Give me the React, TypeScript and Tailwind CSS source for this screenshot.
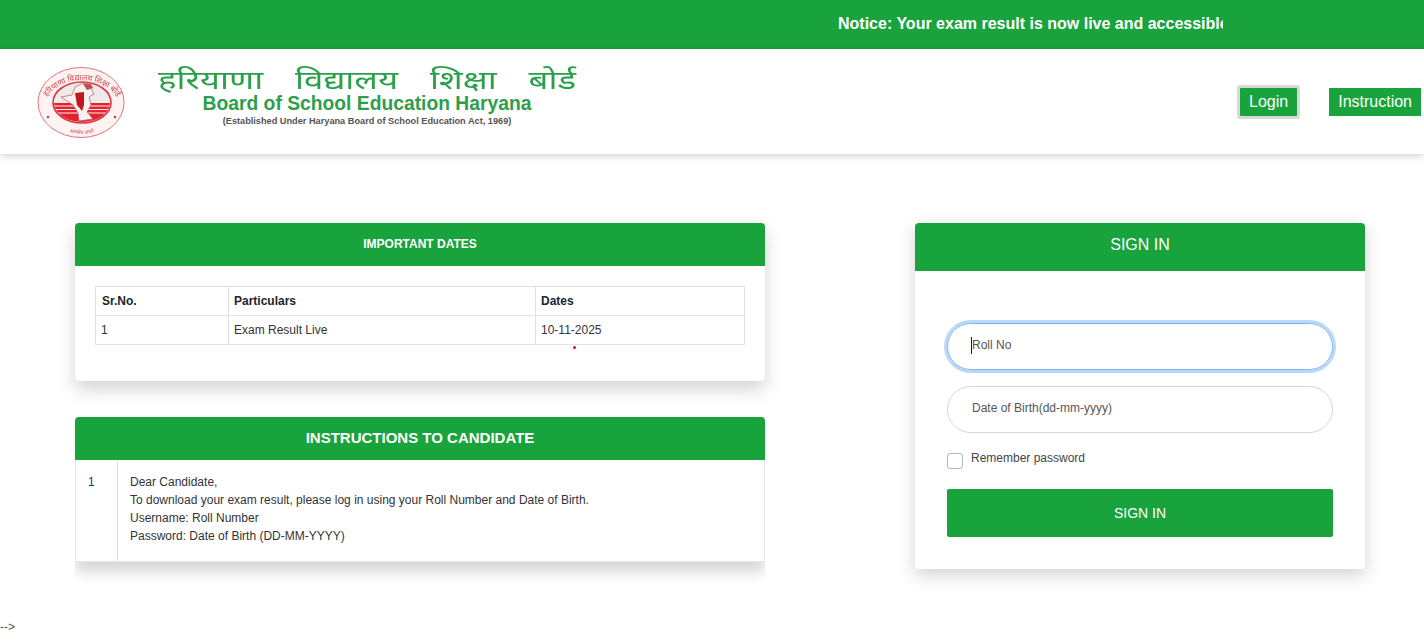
import React from "react";

const GREEN = "bg-[#19a33c]";

/** Board seal, redrawn (the original is a small blurry image) */
const Seal: React.FC = () => (
  <svg viewBox="0 0 88 72" className="w-[88px] h-[72px] blur-[0.5px]" aria-hidden="true">
    <defs>
      <path id="sealTop" d="M6 44 A38 30 0 0 1 84 44" />
      <path id="sealBottom" d="M20 58 A32 24 0 0 0 70 58" />
      <clipPath id="sealInner">
        <ellipse cx="45" cy="35.5" rx="28" ry="19.5" />
      </clipPath>
    </defs>
    <ellipse cx="44" cy="35.5" rx="43" ry="35" fill="#fdf3f3" stroke="#e8707a" strokeWidth="1" />
    <ellipse cx="45" cy="35.5" rx="29" ry="20.5" fill="#efeaea" stroke="#e2343f" strokeWidth="1.6" />
    <text fontSize="8" fill="#d8434e" fontFamily="'Noto Sans', 'DejaVu Sans', sans-serif">
      <textPath href="#sealTop" startOffset="50%" textAnchor="middle">हरियाणा विद्यालय शिक्षा बोर्ड</textPath>
    </text>
    <text fontSize="5" fill="#d8434e" fontFamily="'Noto Sans', 'DejaVu Sans', sans-serif">
      <textPath href="#sealBottom" startOffset="50%" textAnchor="middle">सत्यमेव जयते</textPath>
    </text>
    <circle cx="11" cy="50" r="1.2" fill="#d8303c" />
    <circle cx="78" cy="50" r="1.2" fill="#d8303c" />
    <g clipPath="url(#sealInner)">
      <path d="M17 36 H74 V58 H17 Z" fill="#e4222f" />
      <path d="M17 39 H74 M17 42.5 H74 M17 46 H74" stroke="#fdf3f3" strokeWidth="1.1" />
      <path d="M24 30 L35 28 L38 20 L46 16 L53 19 L57 27 L52 30 L54 38 L50 45 L56 52 L42 54 L41 46 L36 38 Z" fill="#f7f1ef" stroke="#c0505a" strokeWidth="0.7" />
      <path d="M38 26 L47 25 L47 38 L45 44 L40 38 Z" fill="#c4161f" />
      <path d="M46 17 L53 15 L56 21 L50 23 Z" fill="#c0505a" />
    </g>
  </svg>
);

const Th: React.FC<{ children: React.ReactNode; className?: string }> = ({ children, className }) => (
  <th className={`border border-[#dee2e6] px-[5px] h-[29px] text-left text-[12px] font-bold text-[#212529] ${className ?? ""}`}>{children}</th>
);

const Td: React.FC<{ children: React.ReactNode }> = ({ children }) => (
  <td className="border border-[#dee2e6] px-[5px] h-[29px] text-[12px] text-[#333]">{children}</td>
);

const ImportantDates: React.FC = () => (
  <div className="h-[158px] bg-white rounded-[4px] shadow-[0_8px_18px_rgba(0,0,0,0.18)]">
    <div className={`${GREEN} h-[43px] pb-[2px] rounded-t-[4px] flex items-center justify-center text-white text-[12px] font-bold`}>
      IMPORTANT DATES
    </div>
    <div className="px-[20px] pt-[20px] relative">
      <table className="w-full border-collapse table-fixed">
        <thead>
          <tr>
            <Th className="w-[133px] pl-[6px]">Sr.No.</Th>
            <Th className="w-[307px]">Particulars</Th>
            <Th>Dates</Th>
          </tr>
        </thead>
        <tbody>
          <tr>
            <Td>1</Td>
            <Td>Exam Result Live</Td>
            <Td>10-11-2025</Td>
          </tr>
        </tbody>
      </table>
      <span className="absolute left-[498px] top-[80px] w-[3px] h-[3px] rounded-full bg-[#d0103a]" />
    </div>
  </div>
);

const Instructions: React.FC = () => (
  <div className="overflow-hidden pb-[24px] mt-[36px]">
    <div className="bg-white rounded-t-[4px] shadow-[0_10px_14px_rgba(0,0,0,0.16)]">
      <div className={`${GREEN} h-[43px] pb-[1px] rounded-t-[4px] flex items-center justify-center text-white text-[15px] font-bold`}>
        INSTRUCTIONS TO CANDIDATE
      </div>
      <div className="h-[102px] flex border-x border-b border-[#e4e6e8] text-[12px] leading-[18px] text-[#333]">
        <div className="w-[42px] border-r border-[#dee2e6] pl-[12px] pt-[13px]">1</div>
        <div className="pl-[12px] pt-[13px]">
          <p>Dear Candidate,</p>
          <p>To download your exam result, please log in using your Roll Number and Date of Birth.</p>
          <p>Username: Roll Number</p>
          <p>Password: Date of Birth (DD-MM-YYYY)</p>
        </div>
      </div>
    </div>
  </div>
);

const SignIn: React.FC = () => (
  <div className="w-[450px] h-[346px] ml-[150px] bg-white rounded-[4px] shadow-[0_6px_18px_rgba(0,0,0,0.18)]">
    <div className={`${GREEN} h-[48px] pb-[4px] rounded-t-[4px] flex items-center justify-center text-white text-[16px]`}>
      SIGN IN
    </div>
    <div className="px-[32px] pt-[52px] flex flex-col">
      <div className="relative">
        <input
          readOnly
          placeholder="Roll No"
          className="w-full h-[47px] rounded-full border border-[#7fb5ee] ring-[3px] ring-[#b9d8fa] pl-[24px] pb-[4px] text-[12px] outline-none placeholder:text-[#555]"
        />
        <span className="absolute left-[24px] top-[14px] w-px h-[17px] bg-[#222]" />
      </div>
      <input
        readOnly
        placeholder="Date of Birth(dd-mm-yyyy)"
        className="w-full h-[47px] mt-[16px] rounded-full border border-[#d5d5d5] pl-[24px] pb-[4px] text-[12px] outline-none placeholder:text-[#555]"
      />
      <label className="flex mt-[20px] h-[16px] text-[12px] text-[#444]">
        <span className="w-[16px] h-[16px] rounded-[3px] border border-[#b5b5b5] bg-white" />
        <span className="ml-[8px] leading-[10px]">Remember password</span>
      </label>
      <button className={`${GREEN} h-[48px] mt-[20px] pt-[1px] rounded-[2px] text-white text-[14px]`}>SIGN IN</button>
    </div>
  </div>
);

export default function App() {
  return (
    <div className="w-[1424px] h-[641px] overflow-hidden bg-white font-['Liberation_Sans',Arial,sans-serif]">
      <div className={`${GREEN} h-[49px] flex items-center pl-[838px] pb-[1px]`}>
        <div className="w-[385px] overflow-hidden whitespace-nowrap text-white text-[16px] font-bold">
          Notice: Your exam result is now live and accessible online
        </div>
      </div>

      <header className="h-[105px] bg-white shadow-[0_2px_8px_rgba(0,0,0,0.18)] flex items-center">
        <div className="ml-[37px] mt-[3px]">
          <Seal />
        </div>
        <div className="ml-[33px] w-[418px] flex flex-col items-center mb-[10px]">
          <div className="scale-x-[1.34] text-[#2aa04a] text-[26px] leading-[28px] font-['Noto_Sans','DejaVu_Sans',sans-serif] whitespace-nowrap [word-spacing:17px]">
            हरियाणा विद्यालय शिक्षा बोर्ड
          </div>
          <div className="mt-[2px] text-[#2f9e4c] text-[19.3px] leading-[18px] font-bold whitespace-nowrap">Board of School Education Haryana</div>
          <div className="text-[#555] text-[9.2px] leading-[14px] font-bold mt-[1px] whitespace-nowrap">
            (Established Under Haryana Board of School Education Act, 1969)
          </div>
        </div>
        <nav className="ml-auto flex items-center text-white text-[16px]">
          <a className={`${GREEN} h-[28px] px-[9px] flex items-center ring-[3px] ring-[#d8d8d8] rounded-[1px]`}>Login</a>
          <a className={`${GREEN} h-[28px] px-[9px] ml-[32px] mr-[3px] flex items-center`}>Instruction</a>
        </nav>
      </header>

      <main className="flex pt-[69px] pl-[75px]">
        <div className="w-[690px]">
          <ImportantDates />
          <Instructions />
        </div>
        <SignIn />
      </main>

      <div className="mt-[35px] text-[#555] text-[12px] leading-[12px]">--&gt;</div>
    </div>
  );
}
